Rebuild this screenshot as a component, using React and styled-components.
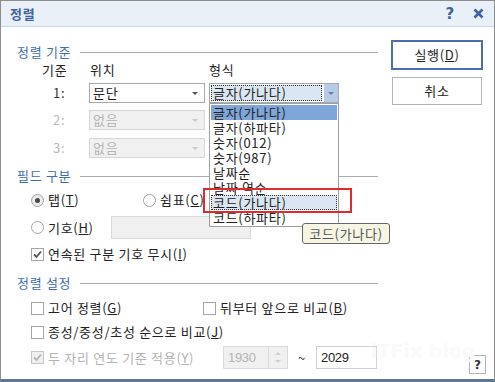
import React from 'react'
import styled, { createGlobalStyle } from 'styled-components'

const GlobalStyle = createGlobalStyle`
  html, body {
    margin: 0;
    padding: 0;
    background: #fff;
  }
  body {
    font-family: "Noto Sans CJK KR", "Noto Sans", sans-serif;
    font-size: 13px;
    line-height: 16px;
    letter-spacing: 0.7px;
    color: #222;
  }
`

const Dialog = styled.div`
  position: relative;
  width: 495px;
  height: 382px;
  box-sizing: border-box;
  border: 1px solid #8d8d8d;
  border-bottom: 3px solid #5b7699;
  display: flex;
  flex-direction: column;
  background: #fff;
  overflow: hidden;
`

const TitleBar = styled.div`
  height: 25px;
  flex: none;
  display: flex;
  align-items: center;
  gap: 18px;
  padding: 0 10px 0 9px;
  background: #eaf0f8;
  border-bottom: 1px solid #c7d5ea;
  color: #3d63a7;
  font-weight: bold;
`

const TitleText = styled.div`
  flex: 1;
`

const TitleIcon = styled.span`
  display: flex;
  align-items: center;
  font-family: "DejaVu Sans", sans-serif;
  font-size: 15px;
  font-weight: bold;
`

const Body = styled.div`
  flex: 1;
  display: flex;
  gap: 13px;
  padding: 13px 11px 5px 16px;
`

const Main = styled.div`
  width: 362px;
  display: flex;
  flex-direction: column;
  padding-top: 4px;
`

const Side = styled.div`
  width: 92px;
  display: flex;
  flex-direction: column;
  align-items: flex-start;
`

const Button = styled.div`
  box-sizing: border-box;
  width: ${(p) => (p.$default ? 92 : 90)}px;
  height: ${(p) => (p.$default ? 30 : 28)}px;
  margin: ${(p) => (p.$default ? '0 0 7px' : '0 0 0 1px')};
  border: ${(p) => (p.$default ? '2px solid #4c6db2' : '1px solid #b3b3b3')};
  background: #fff;
  display: flex;
  align-items: center;
  justify-content: center;
  color: #222;
`

const HelpBox = styled.div`
  margin-top: auto;
  align-self: flex-end;
  margin-right: -3px;
  box-sizing: border-box;
  width: 17px;
  height: 19px;
  border: 1px solid #b5b5b5;
  display: flex;
  align-items: center;
  justify-content: center;
  font-family: "DejaVu Sans", sans-serif;
  font-weight: bold;
  font-size: 12px;
  letter-spacing: 0;
  color: #333;
`

const SectionHeader = styled.div`
  height: 16px;
  margin-top: ${(p) => p.$mt || 0}px;
  display: flex;
  align-items: center;
  gap: 9px;
  color: #3f6db3;
`

const Rule = styled.div`
  flex: 1;
  height: 1px;
  background: #acacac;
`

const SortRow = styled.div`
  display: grid;
  grid-template-columns: 72px 120px 130px;
  align-items: center;
  height: ${(p) => p.$h}px;
  margin-top: ${(p) => p.$mt}px;
`

const ColHead = styled.div`
  padding-left: ${(p) => p.$pl || 0}px;
`

const RowNum = styled.div`
  padding-left: 36px;
  color: ${(p) => (p.$disabled ? '#b8b8b8' : '#333')};
`

const Combo = styled.div`
  position: relative;
  box-sizing: border-box;
  width: ${(p) => p.$w}px;
  height: 20px;
  border: 1px solid ${(p) => (p.$disabled ? '#d6d6d6' : '#a9a9a9')};
  background: ${(p) => (p.$disabled ? '#f0f0f0' : '#fff')};
  color: ${(p) => (p.$disabled ? '#b5b5b5' : '#222')};
  display: flex;
  align-items: center;
  padding-left: 3px;
`

const ComboText = styled.div`
  flex: 1;
`

const Arrow = styled.div`
  width: 0;
  height: 0;
  margin-right: 6px;
  border-left: 3px solid transparent;
  border-right: 3px solid transparent;
  border-top: 3px solid ${(p) => (p.$disabled ? '#c9c9c9' : '#555')};
`

const FocusField = styled.div`
  flex: 1;
  align-self: stretch;
  margin: 1px 2px 1px -2px;
  border: 1px dotted #333;
  background: #dbe6f3;
  display: flex;
  align-items: center;
  padding-left: 1px;
`

const ArrowButton = styled.div`
  width: 14px;
  align-self: stretch;
  background: #b7cbe6;
  display: flex;
  align-items: center;
  justify-content: center;
  & > div {
    margin: 0;
    border-top-color: #6b7f9c;
  }
`

const DropList = styled.div`
  position: absolute;
  left: -1px;
  top: 19px;
  width: 130px;
  height: 124px;
  box-sizing: border-box;
  border: 1px solid #a0a0a0;
  background: #fff;
  padding-top: 1px;
  overflow: hidden;
  z-index: 2;
`

const DropItem = styled.div`
  height: 15px;
  line-height: 15px;
  margin: 0 1px;
  padding-left: 2px;
  background: ${(p) => (p.$selected ? '#7fa6d8' : p.$hover ? '#dbe6f3' : 'transparent')};
  outline: ${(p) => (p.$hover ? '1px dotted #333' : 'none')};
  outline-offset: -1px;
  white-space: nowrap;
  color: #222;
`

const OptRow = styled.div`
  display: grid;
  grid-template-columns: ${(p) => p.$cols || '1fr'};
  align-items: center;
  height: ${(p) => p.$h || 16}px;
  margin-top: ${(p) => p.$mt}px;
  padding-left: 14px;
`

const Opt = styled.div`
  display: flex;
  align-items: center;
  gap: 4px;
  color: ${(p) => (p.$disabled ? '#b4b4b4' : '#222')};
  white-space: nowrap;
`

const RadioCircle = styled.span`
  position: relative;
  box-sizing: border-box;
  width: 13px;
  height: 13px;
  border-radius: 50%;
  border: 1px solid #a3a3a3;
  background: ${(p) => (p.$on ? '#ececec' : '#fff')};
  &::after {
    content: '';
    display: ${(p) => (p.$on ? 'block' : 'none')};
    position: absolute;
    left: 3px;
    top: 3px;
    width: 5px;
    height: 5px;
    border-radius: 50%;
    background: #4a4a4a;
  }
`

const CheckBox = styled.span`
  box-sizing: border-box;
  width: 13px;
  height: 13px;
  border: 1px solid ${(p) => (p.$disabled ? '#c6c6c6' : '#a5a5a5')};
  background: ${(p) => (p.$disabled ? '#efefef' : '#fff')};
  display: flex;
  align-items: center;
  justify-content: center;
`

const Field = styled.div`
  box-sizing: border-box;
  width: ${(p) => p.$w}px;
  height: 23px;
  border: 1px solid ${(p) => (p.$disabled ? '#dadada' : '#d0d0d0')};
  background: ${(p) => (p.$disabled ? '#f0f0f0' : '#fff')};
  color: ${(p) => (p.$disabled ? '#b4b4b4' : '#222')};
  font-family: "Liberation Sans", Arial, sans-serif;
  font-size: 13px;
  display: flex;
  align-items: center;
  padding-left: 4px;
  letter-spacing: -0.3px;
`

const Spin = styled.div`
  display: flex;
  box-sizing: border-box;
  width: 65px;
  height: 23px;
  border: 1px solid #dadada;
  background: #f0f0f0;
`

const SpinText = styled.div`
  flex: 1;
  display: flex;
  align-items: center;
  padding-left: 4px;
  color: #b4b4b4;
  font-family: "Liberation Sans", Arial, sans-serif;
  letter-spacing: -0.3px;
`

const SpinButtons = styled.div`
  width: 18px;
  border-left: 1px solid #dcdcdc;
  display: flex;
  flex-direction: column;
  align-items: center;
  justify-content: space-evenly;
`

const SpinArrow = styled.div`
  width: 0;
  height: 0;
  border-left: 3px solid transparent;
  border-right: 3px solid transparent;
  ${(p) => (p.$up ? 'border-bottom' : 'border-top')}: 3px solid #cfcfcf;
`

const YearRange = styled.div`
  display: flex;
  align-items: center;
`

const Tilde = styled.span`
  width: 28px;
  text-align: center;
  color: #444;
`

const U = styled.span`
  text-decoration: underline;
  text-underline-offset: 1px;
`

const Callout = styled.div`
  position: absolute;
  left: 202px;
  top: 187px;
  width: 149px;
  height: 25px;
  box-sizing: border-box;
  border: 2px solid #e2292b;
  z-index: 3;
`

const Tooltip = styled.div`
  position: absolute;
  left: 301px;
  top: 222px;
  width: 88px;
  height: 21px;
  box-sizing: border-box;
  border: 1px solid #666;
  border-radius: 3px;
  background: #f7f6e5;
  color: #555;
  display: flex;
  align-items: center;
  justify-content: center;
  z-index: 4;
`

const Watermark = styled.div`
  position: absolute;
  left: 370px;
  top: 342px;
  font-family: "DejaVu Sans", sans-serif;
  font-weight: bold;
  font-size: 19px;
  letter-spacing: 0;
  color: #fafafa;
  pointer-events: none;
`

const Check = ({ color }) => (
  <svg width="9" height="9" viewBox="0 0 9 9">
    <path d="M1 4.5 L3.5 7 L8 1.5" fill="none" stroke={color} strokeWidth="1.8" />
  </svg>
)

const CloseIcon = () => (
  <svg width="11" height="11" viewBox="0 0 11 11">
    <path d="M1.5 1.5 L9.5 9.5 M9.5 1.5 L1.5 9.5" stroke="#3d63a7" strokeWidth="2.6" />
  </svg>
)

const formats = [
  '글자(가나다)',
  '글자(하파타)',
  '숫자(012)',
  '숫자(987)',
  '날짜순',
  '날짜 역순',
  '코드(가나다)',
  '코드(하파타)',
]

const App = () => (
  <>
    <GlobalStyle />
    <Dialog>
      <TitleBar>
        <TitleText>정렬</TitleText>
        <TitleIcon>?</TitleIcon>
        <TitleIcon>
          <CloseIcon />
        </TitleIcon>
      </TitleBar>
      <Body>
        <Main>
          <SectionHeader>
            정렬 기준
            <Rule />
          </SectionHeader>
          <SortRow $h={16} $mt={2}>
            <ColHead $pl={25}>기준</ColHead>
            <ColHead $pl={1}>위치</ColHead>
            <ColHead>형식</ColHead>
          </SortRow>
          <SortRow $h={20} $mt={5}>
            <RowNum>1:</RowNum>
            <Combo $w={116}>
              <ComboText>문단</ComboText>
              <Arrow />
            </Combo>
            <Combo $w={130}>
              <FocusField>글자(가나다)</FocusField>
              <ArrowButton>
                <Arrow />
              </ArrowButton>
              <DropList>
                {formats.map((f, i) => (
                  <DropItem key={f} $selected={i === 0} $hover={i === 6}>
                    {f}
                  </DropItem>
                ))}
              </DropList>
            </Combo>
          </SortRow>
          <SortRow $h={20} $mt={7}>
            <RowNum $disabled>2:</RowNum>
            <Combo $w={116} $disabled>
              <ComboText>없음</ComboText>
              <Arrow $disabled />
            </Combo>
          </SortRow>
          <SortRow $h={20} $mt={8}>
            <RowNum $disabled>3:</RowNum>
            <Combo $w={116} $disabled>
              <ComboText>없음</ComboText>
              <Arrow $disabled />
            </Combo>
          </SortRow>

          <SectionHeader $mt={10}>
            필드 구분
            <Rule />
          </SectionHeader>
          <OptRow $mt={8} $cols="112px 1fr">
            <Opt>
              <RadioCircle $on />
              <span>
                탭(<U>T</U>)
              </span>
            </Opt>
            <Opt>
              <RadioCircle />
              <span>
                쉼표(<U>C</U>)
              </span>
            </Opt>
          </OptRow>
          <OptRow $mt={8} $h={23} $cols="80px 1fr">
            <Opt>
              <RadioCircle />
              <span>
                기호(<U>H</U>)
              </span>
            </Opt>
            <Field $w={140} $disabled />
          </OptRow>
          <OptRow $mt={7}>
            <Opt>
              <CheckBox>
                <Check color="#555" />
              </CheckBox>
              <span>
                연속된 구분 기호 무시(<U>I</U>)
              </span>
            </Opt>
          </OptRow>

          <SectionHeader $mt={13}>
            정렬 설정
            <Rule />
          </SectionHeader>
          <OptRow $mt={9} $cols="172px 1fr">
            <Opt>
              <CheckBox />
              <span>
                고어 정렬(<U>G</U>)
              </span>
            </Opt>
            <Opt>
              <CheckBox />
              <span>
                뒤부터 앞으로 비교(<U>B</U>)
              </span>
            </Opt>
          </OptRow>
          <OptRow $mt={8}>
            <Opt>
              <CheckBox />
              <span>
                종성/중성/초성 순으로 비교(<U>J</U>)
              </span>
            </Opt>
          </OptRow>
          <OptRow $mt={6} $h={23} $cols="192px 1fr">
            <Opt $disabled>
              <CheckBox $disabled>
                <Check color="#b3b3b3" />
              </CheckBox>
              <span>
                두 자리 연도 기준 적용(<U>Y</U>)
              </span>
            </Opt>
            <YearRange>
              <Spin>
                <SpinText>1930</SpinText>
                <SpinButtons>
                  <SpinArrow $up />
                  <SpinArrow />
                </SpinButtons>
              </Spin>
              <Tilde>~</Tilde>
              <Field $w={61}>2029</Field>
            </YearRange>
          </OptRow>
        </Main>
        <Side>
          <Button $default>
            <span>
              실행(<U>D</U>)
            </span>
          </Button>
          <Button>취소</Button>
          <HelpBox>?</HelpBox>
        </Side>
      </Body>
      <Watermark>iTFix blog</Watermark>
      <Callout />
      <Tooltip>코드(가나다)</Tooltip>
    </Dialog>
  </>
)

export default App
